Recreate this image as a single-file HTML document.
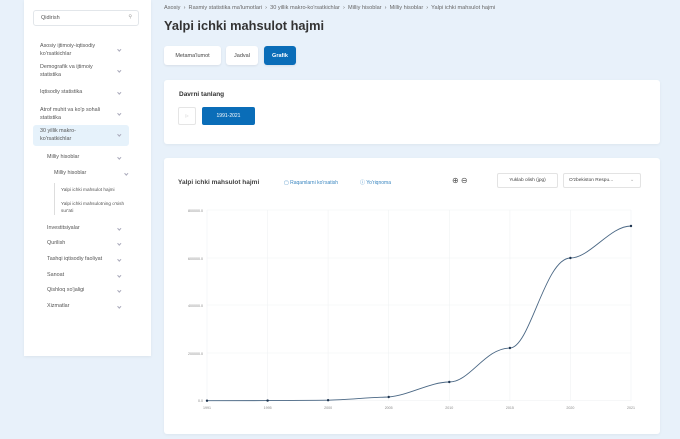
<!DOCTYPE html>
<html><head><meta charset="utf-8"><style>
*{box-sizing:border-box;margin:0;padding:0}
body{width:680px;height:439px;overflow:hidden;background:#e8f1fa;font-family:"Liberation Sans",sans-serif;position:relative;color:#333}
.abs{position:absolute}
.side{left:24px;top:0;width:127px;height:356px;background:#fff;box-shadow:0 1px 3px rgba(0,0,0,.06)}
.search{left:33px;top:10px;width:106px;height:16px;border:1px solid #e2e6ea;border-radius:3px;font-size:5.5px;color:#555;padding:4px 0 0 7px}
.it{font-size:5.4px;color:#555;line-height:7.5px}
.chev{position:absolute;width:2.6px;height:2.6px;border-right:.6px solid #aab;border-bottom:.6px solid #aab;transform:rotate(45deg)}
.card{background:#fff;border-radius:3px;box-shadow:0 1px 3px rgba(0,0,0,.05)}
.btn{height:19px;border-radius:3px;font-size:5.5px;display:flex;align-items:center;justify-content:center;box-shadow:0 1px 2px rgba(0,0,0,.08)}
</style></head><body>
<div class="abs side"></div>
<div class="abs search">Qidirish<span style="position:absolute;right:6px;top:3px;font-size:5px;color:#999">⚲</span></div>

<div class="abs it" style="left:40px;top:43px">Asosiy ijtimoiy-iqtisodiy<br>ko'rsatkichlar</div><div class="chev" style="left:118px;top:48px"></div>
<div class="abs it" style="left:40px;top:64px">Demografik va ijtimoiy<br>statistika</div><div class="chev" style="left:118px;top:69px"></div>
<div class="abs it" style="left:40px;top:89px">Iqtisodiy statistika</div><div class="chev" style="left:118px;top:91px"></div>
<div class="abs it" style="left:40px;top:107px">Atrof muhit va ko'p sohali<br>statistika</div><div class="chev" style="left:118px;top:112px"></div>
<div class="abs" style="left:33px;top:125px;width:96px;height:21px;background:#e6f2fb;border-radius:3px"></div>
<div class="abs it" style="left:40px;top:128px">30 yillik makro-<br>ko'rsatkichlar</div><div class="chev" style="left:118px;top:133px"></div>
<div class="abs it" style="left:47px;top:154px">Milliy hisoblar</div><div class="chev" style="left:118px;top:156px"></div>
<div class="abs it" style="left:54px;top:170px">Milliy hisoblar</div><div class="chev" style="left:125px;top:172px"></div>
<div class="abs" style="left:54px;top:183px;width:1px;height:32px;background:#ddd"></div>
<div class="abs it" style="left:61px;top:186px;font-size:4.7px">Yalpi ichki mahsulot hajmi</div>
<div class="abs it" style="left:61px;top:200px;font-size:4.7px;line-height:7px">Yalpi ichki mahsulotning o'sish<br>sur'ati</div>
<div class="abs it" style="left:47px;top:225px">Investitsiyalar</div><div class="chev" style="left:118px;top:227px"></div>
<div class="abs it" style="left:47px;top:240px">Qurilish</div><div class="chev" style="left:118px;top:242px"></div>
<div class="abs it" style="left:47px;top:256px">Tashqi iqtisodiy faoliyat</div><div class="chev" style="left:118px;top:258px"></div>
<div class="abs it" style="left:47px;top:272px">Sanoat</div><div class="chev" style="left:118px;top:274px"></div>
<div class="abs it" style="left:47px;top:287px">Qishloq xo'jaligi</div><div class="chev" style="left:118px;top:289px"></div>
<div class="abs it" style="left:47px;top:303px">Xizmatlar</div><div class="chev" style="left:118px;top:305px"></div>

<div class="abs" style="left:164px;top:5px;font-size:5.6px;color:#666;white-space:nowrap">Asosiy &nbsp;›&nbsp; Rasmiy statistika ma'lumotlari &nbsp;›&nbsp; 30 yillik makro-ko'rsatkichlar &nbsp;›&nbsp; Milliy hisoblar &nbsp;›&nbsp; Milliy hisoblar &nbsp;›&nbsp; Yalpi ichki mahsulot hajmi</div>
<div class="abs" style="left:164px;top:18px;font-size:12.8px;font-weight:bold;color:#333">Yalpi ichki mahsulot hajmi</div>
<div class="abs btn" style="left:164px;top:46px;width:57px;background:#fff;color:#444">Metama'lumot</div>
<div class="abs btn" style="left:226px;top:46px;width:32px;background:#fff;color:#444">Jadval</div>
<div class="abs btn" style="left:264px;top:46px;width:32px;background:#0a6db8;color:#fff;font-weight:bold">Grafik</div>

<div class="abs card" style="left:164px;top:80px;width:496px;height:64px"></div>
<div class="abs" style="left:179px;top:91px;font-size:6.5px;font-weight:bold;color:#333">Davrni tanlang</div>
<div class="abs" style="left:178px;top:107px;width:18px;height:18px;border:1px solid #e5e5e5;border-radius:2px;font-size:4px;color:#bbb;text-align:center;line-height:16px">▷</div>
<div class="abs" style="left:202px;top:107px;width:53px;height:18px;background:#0a6db8;border-radius:2px;color:#fff;font-size:5px;text-align:center;line-height:18px">1991-2021</div>

<div class="abs card" style="left:164px;top:158px;width:496px;height:276px"></div>
<div class="abs" style="left:178px;top:179px;font-size:6.5px;font-weight:bold;color:#444">Yalpi ichki mahsulot hajmi</div>
<div class="abs" style="left:284px;top:180px;font-size:5px;color:#3a86c0">▢ Raqamlarni ko'rsatish</div>
<div class="abs" style="left:360px;top:179px;font-size:5px;color:#3a86c0">ⓘ Yo'riqnoma</div>
<div class="abs" style="left:452px;top:176px;font-size:8px;color:#555">⊕ ⊖</div>
<div class="abs" style="left:497px;top:173px;width:61px;height:15px;border:1px solid #e3e3e3;border-radius:2px;font-size:4.8px;color:#444;text-align:center;line-height:13px">Yuklab olish (jpg)</div>
<div class="abs" style="left:563px;top:173px;width:78px;height:15px;border:1px solid #e3e3e3;border-radius:2px;font-size:4.8px;color:#444;padding-left:5px;line-height:13px">O'zbekiston Respu...<span style="position:absolute;right:6px;color:#aaa">⌄</span></div>

<svg class="abs" style="left:0;top:0" width="680" height="439" viewBox="0 0 680 439">
<g stroke="#f0f2f4" stroke-width=".6">
<line x1="207" y1="210" x2="631" y2="210"/><line x1="207" y1="258" x2="631" y2="258"/><line x1="207" y1="305" x2="631" y2="305"/><line x1="207" y1="353" x2="631" y2="353"/><line x1="207" y1="400.7" x2="631" y2="400.7"/>
<line x1="207" y1="210" x2="207" y2="401"/><line x1="267.6" y1="210" x2="267.6" y2="401"/><line x1="328.1" y1="210" x2="328.1" y2="401"/><line x1="388.7" y1="210" x2="388.7" y2="401"/><line x1="449.3" y1="210" x2="449.3" y2="401"/><line x1="509.9" y1="210" x2="509.9" y2="401"/><line x1="570.4" y1="210" x2="570.4" y2="401"/><line x1="631" y1="210" x2="631" y2="401"/>
</g>
<g font-family="Liberation Sans" font-size="3.6" fill="#888" text-anchor="end">
<text x="203" y="212">800000.0</text><text x="203" y="260">600000.0</text><text x="203" y="307">400000.0</text><text x="203" y="355">200000.0</text><text x="203" y="402">0.0</text>
</g>
<g font-family="Liberation Sans" font-size="3.6" fill="#888" text-anchor="middle">
<text x="207" y="409">1991</text><text x="267.6" y="409">1995</text><text x="328.1" y="409">2000</text><text x="388.7" y="409">2005</text><text x="449.3" y="409">2010</text><text x="509.9" y="409">2015</text><text x="570.4" y="409">2020</text><text x="631" y="409">2021</text>
</g>
<path d="M207 400.7 C227 400.7 247 400.6 267.6 400.6 C288 400.6 308 400.3 328.1 400.2 C348 399.8 368 397.5 388.7 397 C410 395 430 382 449.3 382 C470 382 485 348 509.9 348 C530 348 545 258 570.4 258 C590 258 610 226 631 226" fill="none" stroke="#4a6784" stroke-width=".9"/>
<g fill="#1f3550">
<circle cx="207" cy="400.7" r="1.2"/><circle cx="267.6" cy="400.6" r="1.2"/><circle cx="328.1" cy="400.2" r="1.2"/><circle cx="388.7" cy="397" r="1.2"/><circle cx="449.3" cy="382" r="1.2"/><circle cx="509.9" cy="348" r="1.2"/><circle cx="570.4" cy="258" r="1.2"/><circle cx="631" cy="226" r="1.2"/>
</g>
</svg>
</body></html>
